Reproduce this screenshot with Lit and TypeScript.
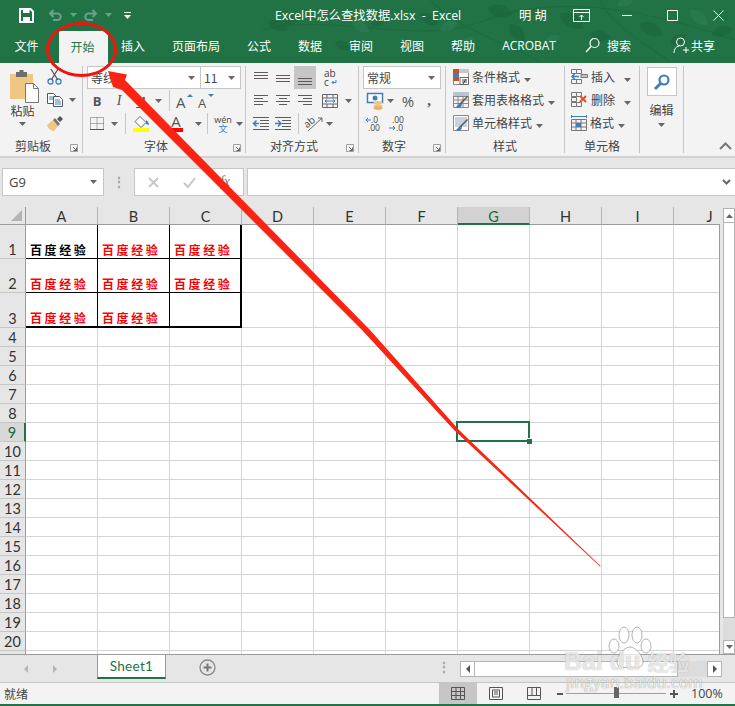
import { LitElement, html, svg, css } from 'lit';
import { customElement } from 'lit/decorators.js';

const BLUE = '#3d7ebb';
const GREY = '#5c5c5c';

// helper for the little ribbon icons
const ico = (w: number, h: number, body: unknown) =>
  html`<svg width=${w} height=${h} viewBox="0 0 ${w} ${h}" fill="none">${body}</svg>`;

const caret = (color = '#666') =>
  ico(7, 4, svg`<path d="M0 0h7L3.5 4z" fill=${color} />`);

const launcher = html`<span class="launch">${ico(8, 8, svg`
  <path d="M.5 7.5V.5h7v7z" stroke="#a0a0a0" /><path d="M3 3l3.5 3.5M6.5 3.5v3h-3" stroke="#666" />`)}</span>`;

const lines = (rows: number[][], color = GREY) =>
  rows.map(([x1, y, x2]) => svg`<path d="M${x1} ${y + 0.5}H${x2}" stroke=${color} />`);

const icons = {
  save: ico(15, 15, svg`<path d="M1 1h10.5L14 3.5V14H1z" stroke="#fff" stroke-width="2" />
    <path d="M4 1.5h6.5V5H4zM4 9h7v5H4z" fill="#fff" />`),
  undo: ico(15, 12, svg`<path d="M2 4.5h7.5a3.2 3.2 0 0 1 0 6.5H5M5.5 1L2 4.5 5.5 8" stroke="#6aa287" stroke-width="2" />`),
  redo: ico(15, 12, svg`<path d="M13 4.5H5.5a3.2 3.2 0 0 0 0 6.5H10M9.5 1L13 4.5 9.5 8" stroke="#6aa287" stroke-width="2" />`),
  qat: ico(7, 7, svg`<path d="M0 0h7v1H0zM0 3h7L3.5 7z" fill="#fff" />`),
  display: ico(17, 13, svg`<path d="M.5.5h16v12H.5zM.5 3.5h16" stroke="#fff" /><path d="M8.5 11V6M6.5 8l2-2 2 2" stroke="#fff" />`),
  min: ico(10, 1, svg`<path d="M0 .5h10" stroke="#fff" />`),
  max: ico(11, 11, svg`<path d="M.5.5h10v10H.5z" stroke="#fff" />`),
  close: ico(11, 11, svg`<path d="M.5.5l10 10M10.5.5l-10 10" stroke="#fff" />`),
  search: ico(15, 17, svg`<circle cx="9.5" cy="6" r="4.5" stroke="#fff" stroke-width="1.2" /><path d="M6 9.5L1 15" stroke="#fff" stroke-width="1.4" />`),
  user: ico(17, 17, svg`<circle cx="7.5" cy="5" r="4" stroke="#fff" /><path d="M1 16c0-4 2-6.5 5-7M13 10v6M10 13h6" stroke="#fff" />`),
  paste: ico(29, 33, svg`
    <path d="M0 4h23v25H0z" fill="#efc783" />
    <path d="M6 2h11v5H6zM9.5 0h4v3h-4z" fill="#6d6d6d" />
    <path d="M15.5 13.5h8l5 5v14h-13z" fill="#fff" stroke="#777" /><path d="M23.5 13.5v5h5" stroke="#777" />`),
  scissors: ico(15, 16, svg`<circle cx="3.5" cy="12.5" r="2.5" stroke=${BLUE} stroke-width="1.3" /><circle cx="11.5" cy="12.5" r="2.5" stroke=${BLUE} stroke-width="1.3" />
    <path d="M4.5 10.5L11 0M10.5 10.5L4 0" stroke="#555" stroke-width="1.3" />`),
  copy: ico(16, 14, svg`<path d="M.5.5h6l2 2v8H.5z" fill="#fff" stroke="#555" /><path d="M6.5 3.5h6l3 3v7h-9z" fill="#fff" stroke="#555" />
    <path d="M2 4h4M2 6h4M8 7h5M8 9h6M8 11h6" stroke=${BLUE} />`),
  brush: ico(16, 15, svg`<path d="M0 9l6-5 5 6-4 5C5 15 1 13 0 9z" fill="#efc783" /><path d="M6 4l5 6 2-2-5-6z" fill="#777" /><path d="M10 3l3-3 3 3-3 3z" fill="#555" />`),
  borders: ico(14, 13, svg`<path d="M.5.5h13v12H.5zM7 .5v12M.5 6.5h13" stroke="#666" stroke-dasharray="1 1" /><path d="M0 12.5h14" stroke="#555" />`),
  fill: ico(17, 12, svg`<path d="M7 .5l6 6-5 5-6-6z" stroke="#666" fill="#fff" /><path d="M13 4c2 1 3 3 3 5l-3-1z" fill=${BLUE} />`),
  grow: ico(18, 16, svg`<text x="0" y="15" class="big-a">A</text><path d="M11 4l3-3 3 3z" fill=${BLUE} />`),
  shrink: ico(18, 14, svg`<text x="0" y="13.5" class="small-a">A</text><path d="M10 0h6l-3 3z" fill=${BLUE} />`),
  alignV: (y: number) => ico(14, 16, svg`${lines([[0, y, 14], [0, y + 3, 14], [0, y + 6, 14]])}`),
  wrap: ico(13, 17, svg`<text x="0" y="8" class="ab">ab</text><text x="0" y="16.5" class="ab">c</text><path d="M12 11v2.5H8M9.5 12L8 13.5 9.5 15" stroke=${BLUE} />`),
  alignH: (a: number, b: number) => ico(14, 13, svg`${lines([[0, 1, 14], [a, 4, b], [0, 7, 14], [a, 10, b]])}`),
  merge: ico(16, 14, svg`<path d="M.5.5h15v13H.5zM.5 4h15M.5 10h15M5 .5V4M11 .5V4M5 10v4M11 10v4" stroke="#666" /><path d="M3 7h10M5 5.5L3 7l2 1.5M11 5.5L13 7l-2 1.5" stroke=${BLUE} />`),
  outdent: ico(16, 13, svg`${lines([[0, 0, 16], [7, 3, 16], [7, 6, 16], [7, 9, 16], [0, 12, 16]])}<path d="M6 6.5H1M3.5 3.5L.5 6.5l3 3" stroke=${BLUE} stroke-width="1.5" />`),
  indent: ico(16, 13, svg`${lines([[0, 0, 16], [7, 3, 16], [7, 6, 16], [7, 9, 16], [0, 12, 16]])}<path d="M0 6.5h5M3 3.5l3 3-3 3" stroke=${BLUE} stroke-width="1.5" />`),
  orient: ico(18, 17, svg`<text x="0" y="10" class="ab" transform="rotate(-40 6 9)">ab</text><path d="M3 16L17 3M13 3h4v4" stroke="#666" />`),
  accounting: ico(17, 18, svg`<path d="M.5 1.5h15v9H.5z" fill="#fff" stroke=${BLUE} stroke-width="1.5" /><circle cx="8" cy="6" r="2.5" fill=${BLUE} />
    <ellipse cx="11" cy="11" rx="4.5" ry="1.8" fill="#efc783" /><ellipse cx="11" cy="14" rx="4.5" ry="1.8" fill="#efc783" /><ellipse cx="11" cy="16" rx="4.5" ry="1.8" fill="#e2b163" />`),
  decLess: ico(16, 15, svg`<text x="5" y="6.5" class="dec">.0</text><text x="2" y="14.5" class="dec">.00</text><path d="M5 4H0M2 2L0 4l2 2" stroke=${BLUE} />`),
  decMore: ico(16, 15, svg`<text x="4" y="6.5" class="dec">.00</text><text x="8" y="14.5" class="dec">.0</text><path d="M1 12h6M5 10l2 2-2 2" stroke=${BLUE} />`),
  cond: ico(16, 16, svg`<path d="M.5.5h15v15H.5z" fill="#fff" stroke="#888" /><path d="M0 0h6v4H0zM0 8h6v4H0z" fill="#c8502b" /><path d="M6 0h10v4H6z" fill="#c7c7c7" /><path d="M0 4h6v4H0z" fill=${BLUE} />
    <path d="M7 8.5h8.5v7H7z" fill="#fff" stroke="#666" /><path d="M9 11h5M9 13h5M13 10l-3 5" stroke="#444" />`),
  table: ico(16, 16, svg`<path d="M.5.5h15v15H.5zM.5 4.5h15M.5 8h15M.5 11.5h15M5 .5v15M10 .5v15" stroke="#888" /><path d="M0 0h16v4H0z" fill="#b9c4d2" /><path d="M15 5l-6 6-1 3-4 2 3-5 2-2 5-5z" fill="#555" /><path d="M3 15l4-4 2 2-2 3z" fill=${BLUE} />`),
  cellStyle: ico(16, 16, svg`<path d="M.5.5h15v15H.5z" stroke="#888" fill="#fff" /><path d="M2 2h12v10H2z" fill="#c4d2e4" /><path d="M15 5l-6 6-1 3-4 2 3-5 2-2 5-5z" fill="#555" /><path d="M3 15l4-4 2 2-2 3z" fill=${BLUE} />`),
  insert: ico(17, 15, svg`<path d="M.5.5h5v4h-5zM.5 10.5h5v4h-5zM5.5 10.5h5v4h-5zM5.5.5h5v4h-5z" stroke="#777" /><path d="M10 5.5h6.5v3H10z" fill="#b9c4d2" stroke="#777" /><path d="M8 7.5H1M3.5 5L1 7.5 3.5 10" stroke=${BLUE} stroke-width="1.5" />`),
  del: ico(17, 15, svg`<path d="M.5.5h5v4h-5zM5.5.5h5v4h-5zM.5 10.5h5v4h-5zM5.5 10.5h5v4h-5zM.5 5.5h5v4h-5z" stroke="#777" /><path d="M9 4l6 6M15 4l-6 6" stroke="#d9542b" stroke-width="2" />`),
  format: ico(16, 17, svg`<path d="M.5 1v3M15.5 1v3M1 2.5h14" stroke=${BLUE} /><path d="M.5 5.5h15v11H.5zM5 5.5v11M10 5.5v11M.5 9h15M.5 13h15" stroke="#777" /><path d="M5 9h5v4H5z" fill=${BLUE} />`),
  find: ico(18, 18, svg`<circle cx="11" cy="7" r="4.5" stroke=${BLUE} stroke-width="2.2" /><path d="M7.5 10.5L2 16" stroke=${BLUE} stroke-width="3" />`),
  chevUp: ico(13, 8, svg`<path d="M1 7l5.5-5.5L12 7" stroke="#777" stroke-width="2" />`),
  chevDown: ico(9, 6, svg`<path d="M1 1l3.5 3.5L8 1" stroke="#666" stroke-width="2" />`),
  cancel: ico(11, 11, svg`<path d="M1 1l9 9M10 1l-9 9" stroke="#c6c6c6" stroke-width="1.8" />`),
  enter: ico(13, 11, svg`<path d="M1 6l4 4 7-9" stroke="#c6c6c6" stroke-width="2" />`),
  viewNormal: ico(14, 13, svg`<path d="M.5.5h13v12H.5zM5 .5v12M9.5 .5v12M.5 4.5h13M.5 8.5h13" stroke="#555" />`),
  viewPage: ico(14, 13, svg`<path d="M.5.5h13v12H.5z" stroke="#555" /><path d="M3.5 3h7v7h-7zM5 5h4M5 7h4" stroke="#555" />`),
  viewBreak: ico(14, 13, svg`<path d="M.5.5h13v12H.5zM.5 8.5h13M5 .5v8M9.5 .5v8" stroke="#555" />`),
  plusCircle: ico(17, 17, svg`<circle cx="8.5" cy="8.5" r="7.5" stroke="#8a8a8a" stroke-width="1.3" /><path d="M8.5 4.5v8M4.5 8.5h8" stroke="#777" stroke-width="2" />`),
};

const LEAVES = [
  [268, 22, 20, 1], [284, 24, -30, 0.9], [352, 20, 35, 1], [372, 26, -40, 1.1], [420, 14, 30, 1], [440, 30, -25, 0.9],
  [488, 8, 15, 1.2], [510, 24, 50, 1.1], [545, 42, -20, 0.8], [560, 14, 30, 1.3], [590, 34, 10, 1], [618, 6, -35, 1],
  [640, 24, 25, 1.2], [670, 44, -30, 0.9], [690, 10, 40, 1.1], [712, 34, -15, 1], [335, 42, 25, 0.8], [460, 46, -30, 0.8],
];

const COLS = ['A', 'B', 'C', 'D', 'E', 'F', 'G', 'H', 'I', 'J'];
const BAIDU = '百度经验';

@customElement('app-root')
export class AppRoot extends LitElement {
  static styles = css`
    :host {
      --green: #217346;
      --blue: #3d7ebb;
      display: flex;
      flex-direction: column;
      position: relative;
      width: 735px;
      height: 706px;
      overflow: hidden;
      background: #e6e6e6;
      font-family: 'Noto Sans CJK SC', sans-serif;
      font-size: 12px;
      color: #444;
    }
    svg {
      overflow: visible;
    }

    /* barra verde */
    .top {
      position: relative;
      height: 63px;
      background: var(--green);
      overflow: hidden;
      color: #fff;
    }
    .leaves {
      position: absolute;
      inset: 0;
      opacity: 0.75;
    }
    .titlebar {
      position: relative;
      display: grid;
      grid-template-columns: 19px 29px 22px 13px 22px 19px 7px 144px 187px 57px 28px 26px 17px 32px 10px 35px 11px 35px 11px;
      height: 30px;
      align-items: center;
      justify-items: start;
      font-family: 'Open Sans', 'Noto Sans CJK SC', sans-serif;
      white-space: nowrap;
    }
    .title {
      font-size: 12.3px;
    }
    .tabs {
      position: relative;
      display: flex;
      height: 33px;
      padding-left: 1px;
    }
    .tab {
      display: flex;
      align-items: center;
      padding: 0 13.5px 2px;
      white-space: nowrap;
    }
    .tab.first {
      padding-right: 20px;
    }
    .tab.on {
      width: 49px;
      box-sizing: border-box;
      padding: 0 12px 1px;
      margin-top: 1px;
      background: #f3f3f3;
      color: var(--green);
    }
    .tab.acro {
      font-family: 'Open Sans', sans-serif;
      font-size: 12px;
      padding-right: 29px;
    }
    .tab.search {
      gap: 7px;
      padding: 0 42px 2px 0;
    }
    .tab.share {
      gap: 1px;
      padding: 0 0 2px;
    }

    /* faixa de opções */
    .ribbon {
      display: flex;
      height: 95px;
      box-sizing: border-box;
      padding: 3px 0 3px;
      background: #f3f3f3;
      border-bottom: 2px solid #d2d2d2;
      position: relative;
    }
    .group {
      display: flex;
      flex-direction: column;
      box-sizing: border-box;
      border-right: 1px solid #c6c6c6;
    }
    .g-clip { width: 83px; }
    .g-font { width: 163px; }
    .g-align { width: 113px; }
    .g-num { width: 87px; }
    .g-style { width: 119px; }
    .g-cell { width: 75px; }
    .g-edit { width: 44px; }
    .g-body {
      height: 71px;
    }
    .foot {
      display: flex;
      height: 16px;
      align-items: center;
    }
    .lab {
      flex: 1;
      text-align: center;
    }
    .launch {
      display: flex;
      width: 16px;
      justify-content: center;
      padding-top: 6px;
    }
    .row {
      display: grid;
      height: 23px;
      align-items: center;
      justify-items: center;
    }
    .rsep {
      width: 1px;
      height: 21px;
      background: #c6c6c6;
    }
    .combo {
      display: flex;
      align-items: center;
      justify-content: space-between;
      box-sizing: border-box;
      height: 23px;
      padding: 0 5px 0 3px;
      background: #fff;
      border: 1px solid #c6c6c6;
      justify-self: stretch;
    }
    .combo + .combo {
      border-left: 0;
    }
    .letter {
      font: 700 13px 'Open Sans', sans-serif;
      color: #555;
    }
    .letter.i {
      font: italic 14px 'Liberation Serif', serif;
    }
    .letter.u {
      text-decoration: underline;
    }
    .big-a {
      font: 15px 'Open Sans', sans-serif;
      fill: #555;
    }
    .small-a {
      font: 13px 'Open Sans', sans-serif;
      fill: #555;
    }
    .ab {
      font: 10px 'Open Sans', sans-serif;
      fill: #444;
    }
    .dec {
      font: 8.5px 'Open Sans', sans-serif;
      fill: #444;
    }

    .clip {
      display: grid;
      grid-template-columns: 45px 38px;
      height: 71px;
    }
    .paste {
      display: flex;
      flex-direction: column;
      align-items: center;
      padding-top: 4px;
    }
    .paste svg:first-child {
      margin-left: 3px;
    }
    .paste span {
      line-height: 16px;
    }
    .paste span + svg {
      margin-top: 3px;
    }
    .clip-side {
      display: flex;
      flex-direction: column;
      padding: 3px 0 0 2px;
      gap: 7px;
    }
    .clip-row {
      display: flex;
      align-items: center;
      gap: 6px;
      height: 16px;
    }

    .font-1 { grid-template-columns: 114px 40px; padding-left: 4px; }
    .font-2 { grid-template-columns: 22px 22px 22px 12px 10px 22px 22px; padding-left: 3px; }
    .font-3 { grid-template-columns: 22px 12px 10px 22px 13px 22px 8px 7px 10px 22px 10px; padding-left: 3px; }
    .fill-ico, .color-ico {
      display: flex;
      flex-direction: column;
      align-items: center;
    }
    .bar-y {
      width: 16px;
      height: 4px;
      background: #ffff00;
    }
    .bar-r {
      width: 13px;
      height: 4px;
      background: #ff0000;
    }
    .color-a {
      font: 15px/13px 'Open Sans', sans-serif;
      color: #555;
    }
    .wen {
      display: flex;
      flex-direction: column;
      align-items: center;
      font: 9px/9px 'Open Sans', 'Noto Sans CJK SC', sans-serif;
    }
    .wen b {
      font-weight: 400;
      color: var(--blue);
    }

    .al-1 { grid-template-columns: 22px 22px 22px 28px; padding-left: 4px; }
    .al-2 { grid-template-columns: 22px 22px 22px 28px 8px; padding-left: 4px; }
    .al-3 { grid-template-columns: 22px 22px 8px 23px 8px; padding-left: 4px; }
    .active {
      justify-self: stretch;
      display: flex;
      justify-content: center;
      align-items: center;
      height: 23px;
      background: #c6c6c6;
    }
    .num-1 { grid-template-columns: 78px; padding-left: 4px; }
    .num-2 { grid-template-columns: 24px 7px 28px 14px; padding-left: 4px; }
    .num-3 { grid-template-columns: 22px 22px; padding-left: 4px; }
    .pct {
      font: 15px 'Open Sans', sans-serif;
      color: #555;
    }
    .comma {
      font: 700 15px 'Liberation Serif', serif;
      color: #555;
    }
    .list {
      display: flex;
      flex-direction: column;
      margin-top: -1px;
      padding: 0 0 0 7px;
    }
    .item {
      display: flex;
      align-items: center;
      height: 23px;
      gap: 3px;
      white-space: nowrap;
    }
    .item .after {
      margin-left: 1px;
    }
    .cells .item {
      gap: 3px;
    }
    .cells .gap {
      margin-left: 6px;
    }
    .cells .list {
      padding-left: 6px;
    }
    .cells .foot, .g-style .foot {
      margin-top: 1px;
    }
    .edit {
      display: flex;
      flex-direction: column;
      align-items: center;
      padding-top: 1px;
      gap: 5px;
    }
    .edit-box {
      display: flex;
      align-items: center;
      justify-content: center;
      width: 30px;
      height: 29px;
      box-sizing: border-box;
      background: #fff;
      border: 1px solid #c6c6c6;
    }
    .collapse {
      position: absolute;
      right: 3px;
      bottom: 3px;
    }

    /* barra de fórmulas */
    .formula {
      display: flex;
      align-items: center;
      height: 49px;
      padding: 0 0 1px 2px;
      box-sizing: border-box;
    }
    .name {
      display: flex;
      align-items: center;
      justify-content: space-between;
      box-sizing: border-box;
      width: 102px;
      height: 28px;
      padding: 0 6px;
      background: #fff;
      border: 1px solid #c6c6c6;
      font: 13px 'Open Sans', sans-serif;
    }
    .dots {
      width: 30px;
      text-align: center;
      color: #a0a0a0;
      font: 700 12px/8px 'Open Sans', sans-serif;
    }
    .fx-btns {
      display: grid;
      grid-template-columns: 36px 36px 36px;
      align-items: center;
      justify-items: center;
      box-sizing: border-box;
      width: 110px;
      height: 28px;
      background: #fff;
      border: 1px solid #c6c6c6;
    }
    .fx {
      font: italic 14px 'Liberation Serif', serif;
      color: #777;
    }
    .input {
      display: flex;
      align-items: center;
      justify-content: flex-end;
      flex: 1;
      height: 28px;
      margin-left: 3px;
      padding-right: 4px;
      box-sizing: border-box;
      background: #fff;
      border: 1px solid #c6c6c6;
      border-right: 0;
    }

    /* planilha */
    .sheet-wrap {
      display: flex;
      height: 447px;
    }
    .sheet {
      width: 720px;
      overflow: hidden;
      flex: none;
    }
    .head, .grid-row {
      display: flex;
      width: 748px;
    }
    .head {
      height: 18px;
      font: 14.5px/19px Lato, sans-serif;
      color: #333;
    }
    .corner {
      display: flex;
      align-items: flex-end;
      justify-content: flex-end;
      width: 26px;
      box-sizing: border-box;
      padding: 0 3px 3px 0;
      border-right: 1px solid #9c9c9c;
      border-bottom: 1px solid #9c9c9c;
      flex: none;
    }
    .ch {
      width: 72px;
      box-sizing: border-box;
      text-align: center;
      border-right: 1px solid #b4b4b4;
      border-bottom: 1px solid #9c9c9c;
      flex: none;
    }
    .ch.cur {
      background: #d2d2d2;
      color: #1d6a3f;
      border-bottom: 2px solid var(--green);
    }
    .body {
      width: 720px;
      height: 429px;
      overflow: hidden;
      box-sizing: border-box;
      border-right: 1px solid #9c9c9c;
    }
    .grid-row {
      height: 19px;
    }
    .grid-row.r1, .grid-row.r2 {
      height: 34px;
    }
    .grid-row.r3 {
      height: 35px;
    }
    .rh {
      display: flex;
      align-items: flex-end;
      justify-content: center;
      width: 26px;
      box-sizing: border-box;
      background: #e6e6e6;
      border-right: 1px solid #9c9c9c;
      border-bottom: 1px solid #c6c6c6;
      font: 14.5px/16px Lato, sans-serif;
      color: #333;
      flex: none;
    }
    .rh.cur {
      background: #d8d8d8;
      border-right: 2px solid var(--green);
      color: #1d6a3f;
    }
    .c {
      position: relative;
      display: flex;
      align-items: flex-end;
      width: 72px;
      box-sizing: border-box;
      padding: 0 0 0 4px;
      background: #fff;
      border-right: 1px solid #d4d4d4;
      border-bottom: 1px solid #d4d4d4;
      flex: none;
      font-weight: 700;
      font-size: 12px;
      line-height: 16px;
      letter-spacing: 2.6px;
      color: #ff0000;
      white-space: nowrap;
    }
    .c.black { color: #000; }
    .c.bb { border-bottom-color: #000; }
    .c.br { border-right-color: #000; }
    .c.thick-r { border-right: 2px solid #000; }
    .c.thick-b { border-bottom: 2px solid #000; }
    .sel {
      position: absolute;
      z-index: 2;
      left: -2px;
      top: -2px;
      width: 74px;
      height: 21px;
      box-sizing: border-box;
      border: 2px solid var(--green);
    }
    .handle {
      position: absolute;
      right: -4px;
      bottom: -4px;
      width: 5px;
      height: 5px;
      background: var(--green);
      box-shadow: 0 -1px #fff;
    }
    .vbar {
      display: flex;
      flex-direction: column;
      width: 12px;
      margin: 1px 0 0 3px;
      background: #dcdcdc;
    }
    .sb-btn {
      display: flex;
      align-items: center;
      justify-content: center;
      height: 15px;
      background: #fff;
      border: 1px solid #b4b4b4;
      box-sizing: border-box;
      flex: none;
    }
    .vbar .sb-btn:last-child {
      height: 14px;
    }
    .v-thumb {
      height: 395px;
      background: #fff;
      border: 1px solid #b4b4b4;
      border-top: 0;
      box-sizing: border-box;
      flex: none;
    }
    .v-space {
      flex: 1;
    }

    /* abas */
    .sheetbar {
      display: flex;
      align-items: stretch;
      height: 28px;
      box-sizing: border-box;
      border-top: 1px solid #9c9c9c;
      background: #e6e6e6;
    }
    .nav {
      display: flex;
      width: 97px;
      align-items: center;
      box-sizing: border-box;
      padding-left: 24px;
      gap: 25px;
      flex: none;
    }
    .sheet-tab {
      display: flex;
      align-items: center;
      justify-content: center;
      width: 69px;
      height: 24px;
      box-sizing: border-box;
      background: #fff;
      border-left: 1px solid #9c9c9c;
      border-right: 1px solid #9c9c9c;
      border-bottom: 2px solid var(--green);
      font: 13.5px Lato, sans-serif;
      letter-spacing: 0.3px;
      color: var(--green);
      flex: none;
    }
    .add {
      display: flex;
      align-items: center;
      width: 266px;
      padding: 0 0 3px 33px;
      box-sizing: border-box;
      flex: none;
    }
    .hdots {
      display: flex;
      width: 12px;
      margin-left: 6px;
      padding-bottom: 3px;
      align-items: center;
      flex: none;
      color: #a0a0a0;
      font: 700 12px/8px 'Open Sans', sans-serif;
      justify-content: center;
    }
    .hbar {
      display: flex;
      width: 262px;
      height: 16px;
      margin: 6px 0 0 10px;
      background: #dcdcdc;
      flex: none;
    }
    .hbar .sb-btn {
      width: 15px;
      height: 16px;
    }
    .h-thumb {
      width: 203px;
      background: #fff;
      border: 1px solid #b4b4b4;
      border-left: 0;
      box-sizing: border-box;
    }
    .h-space {
      flex: 1;
    }

    /* barra de status */
    .status {
      display: flex;
      align-items: center;
      height: 24px;
      box-sizing: border-box;
      background: #f3f3f3;
      border-top: 1px solid #c6c6c6;
      border-bottom: 2px solid var(--green);
      padding-left: 4px;
    }
    .ready {
      width: 435px;
      flex: none;
    }
    .view {
      display: flex;
      align-items: center;
      justify-content: center;
      width: 38px;
      height: 100%;
      flex: none;
    }
    .view.on {
      background: #c6c6c6;
    }
    .zoom {
      display: grid;
      grid-template-columns: 8px 104px 12px;
      align-items: center;
      justify-items: center;
      margin-left: 3px;
      flex: none;
    }
    .z-track {
      position: relative;
      width: 100px;
      height: 1px;
      background: #a0a0a0;
    }
    .z-thumb {
      position: absolute;
      left: 48px;
      top: -6px;
      width: 5px;
      height: 11px;
      background: #666;
    }
    .pct-label {
      margin-left: 11px;
      font: 12.5px 'Open Sans', sans-serif;
      color: #444;
    }

    /* anotações por cima da captura */
    .overlay {
      position: absolute;
      z-index: 3;
      left: 0;
      top: 0;
      pointer-events: none;
    }
    .mark {
      position: absolute;
      z-index: 3;
      left: 564px;
      top: 626px;
      width: 140px;
      height: 70px;
      color: rgba(255, 255, 255, 0.72);
      text-shadow: 0 0 1px rgba(110, 110, 110, 0.6);
      pointer-events: none;
    }
    .mark-main {
      position: absolute;
      left: 0;
      top: 22px;
      display: flex;
      align-items: center;
      font: 700 25px/26px 'Liberation Sans', sans-serif;
      white-space: nowrap;
    }
    .mark-cn {
      margin-left: 7px;
      font: 700 21px/26px 'Noto Sans CJK SC', sans-serif;
    }
    .mark-sub {
      position: absolute;
      left: 2px;
      top: 47px;
      font: 15.5px/18px 'Open Sans', sans-serif;
      letter-spacing: 0.3px;
      color: rgba(255, 255, 255, 0.85);
      text-shadow: 0 0 1px rgba(90, 90, 90, 0.8);
      white-space: nowrap;
    }
    .paw {
      position: absolute;
      left: 44px;
      top: 0;
    }
  `;

  private cellClass(col: number, row: number) {
    const parts = ['c'];
    if (row <= 3 && col < 3) {
      if (col === 0 && row === 1) parts.push('black');
      parts.push(row === 3 ? 'thick-b' : 'bb');
      parts.push(col === 2 ? 'thick-r' : 'br');
    }
    return parts.join(' ');
  }

  private renderRow(row: number) {
    const filled = (col: number) => row <= 3 && col < 3 && !(row === 3 && col === 2);
    // a linha 21 mal aparece, só a borda de cima
    return html`
      <div class="grid-row r${row}">
        <div class="rh ${row === 9 ? 'cur' : ''}">${row < 21 ? row : ''}</div>
        ${COLS.map(
          (_, col) => html`<div class=${this.cellClass(col, row)}>
            ${filled(col) ? BAIDU : ''}
            ${row === 9 && col === 6 ? html`<div class="sel"><div class="handle"></div></div>` : ''}
          </div>`
        )}
      </div>
    `;
  }

  private renderTop() {
    return html`
      <div class="top">
        <svg class="leaves" width="735" height="63">
          <path d="M262 30C330 12 420 46 480 22S620 0 735 40M430 0c30 30 70 40 110 62M600 0c10 24 40 40 70 62" stroke="#1b6339" stroke-width="1.2" fill="none" opacity=".6" />
          ${LEAVES.map(
            ([x, y, r, s], i) => svg`<path d="M0 0C5-7 15-7 21 0 15 7 5 7 0 0z"
              fill=${i % 3 === 2 ? '#2f7f54' : '#1b6339'} opacity=".75"
              transform="translate(${x} ${y}) rotate(${r}) scale(${s})" />`
          )}
        </svg>
        <div class="titlebar">
          <span></span>${icons.save}
          ${icons.undo}${caret('#6aa287')}${icons.redo}${caret('#6aa287')}
          ${icons.qat}<span></span>
          <span class="title">Excel中怎么查找数据.xlsx&nbsp; -&nbsp; Excel</span><span></span>
          <span class="title">明 胡</span><span></span>
          ${icons.display}<span></span>${icons.min}<span></span>${icons.max}<span></span>${icons.close}
        </div>
        <div class="tabs">
          <div class="tab first">文件</div>
          <div class="tab on">开始</div>
          ${['插入', '页面布局', '公式', '数据', '审阅', '视图', '帮助'].map((t) => html`<div class="tab">${t}</div>`)}
          <div class="tab acro">ACROBAT</div>
          <div class="tab search">${icons.search}<span>搜索</span></div>
          <div class="tab share">${icons.user}<span>共享</span></div>
        </div>
      </div>
    `;
  }

  private renderRibbon() {
    return html`
      <div class="ribbon">
        <div class="group g-clip">
          <div class="g-body clip">
            <div class="paste">${icons.paste}<span>粘贴</span>${caret()}</div>
            <div class="clip-side">
              <div class="clip-row">${icons.scissors}</div>
              <div class="clip-row">${icons.copy}${caret()}</div>
              <div class="clip-row">${icons.brush}</div>
            </div>
          </div>
          <div class="foot"><span class="lab">剪贴板</span>${launcher}</div>
        </div>

        <div class="group g-font">
          <div class="g-body">
            <div class="row font-1">
              <div class="combo"><span>等线</span>${caret()}</div>
              <div class="combo"><span>11</span>${caret()}</div>
            </div>
            <div class="row font-2">
              <span class="letter">B</span><span class="letter i">I</span><span class="letter u">U</span>${caret()}
              <span class="rsep"></span>${icons.grow}${icons.shrink}
            </div>
            <div class="row font-3">
              ${icons.borders}${caret()}<span class="rsep"></span>
              <div class="fill-ico">${icons.fill}<span class="bar-y"></span></div><span></span>
              <div class="color-ico"><span class="color-a">A</span><span class="bar-r"></span></div><span></span>${caret()}
              <span class="rsep"></span>
              <div class="wen"><span>wén</span><b>文</b></div>${caret()}
            </div>
          </div>
          <div class="foot"><span class="lab">字体</span>${launcher}</div>
        </div>

        <div class="group g-align">
          <div class="g-body">
            <div class="row al-1">
              ${icons.alignV(2)}${icons.alignV(5)}
              <div class="active">${icons.alignV(8)}</div>
              ${icons.wrap}
            </div>
            <div class="row al-2">
              ${icons.alignH(0, 9)}${icons.alignH(3, 11)}${icons.alignH(5, 14)}${icons.merge}${caret()}
            </div>
            <div class="row al-3">
              ${icons.outdent}${icons.indent}<span class="rsep"></span>${icons.orient}${caret()}
            </div>
          </div>
          <div class="foot"><span class="lab">对齐方式</span>${launcher}</div>
        </div>

        <div class="group g-num">
          <div class="g-body">
            <div class="row num-1"><div class="combo"><span>常规</span>${caret()}</div></div>
            <div class="row num-2">
              ${icons.accounting}${caret()}<span class="pct">%</span><span class="comma">,</span>
            </div>
            <div class="row num-3">${icons.decLess}${icons.decMore}</div>
          </div>
          <div class="foot"><span class="lab">数字</span>${launcher}</div>
        </div>

        <div class="group g-style">
          <div class="g-body list">
            <div class="item">${icons.cond}<span>条件格式</span><span class="after">${caret()}</span></div>
            <div class="item">${icons.table}<span>套用表格格式</span><span class="after">${caret()}</span></div>
            <div class="item">${icons.cellStyle}<span>单元格样式</span><span class="after">${caret()}</span></div>
          </div>
          <div class="foot"><span class="lab">样式</span></div>
        </div>

        <div class="group g-cell cells">
          <div class="g-body list">
            <div class="item">${icons.insert}<span>插入</span><span class="gap">${caret()}</span></div>
            <div class="item">${icons.del}<span>删除</span><span class="gap">${caret()}</span></div>
            <div class="item">${icons.format}<span>格式</span><span class="after">${caret()}</span></div>
          </div>
          <div class="foot"><span class="lab">单元格</span></div>
        </div>

        <div class="group g-edit">
          <div class="g-body edit">
            <div class="edit-box">${icons.find}</div>
            <span>编辑</span>
            ${caret()}
          </div>
        </div>
        <div class="collapse">${icons.chevUp}</div>
      </div>
    `;
  }

  private renderFormula() {
    return html`
      <div class="formula">
        <div class="name"><span>G9</span>${caret()}</div>
        <div class="dots">⋮</div>
        <div class="fx-btns">${icons.cancel}${icons.enter}<span class="fx">fx</span></div>
        <div class="input">${icons.chevDown}</div>
      </div>
    `;
  }

  private renderSheet() {
    const rows = Array.from({ length: 21 }, (_, i) => i + 1);
    return html`
      <div class="sheet-wrap">
        <div class="sheet">
          <div class="head">
            <div class="corner">${ico(11, 11, svg`<path d="M11 0v11H0z" fill="#b4b4b4" />`)}</div>
            ${COLS.map((c) => html`<div class="ch ${c === 'G' ? 'cur' : ''}">${c}</div>`)}
          </div>
          <div class="body">${rows.map((r) => this.renderRow(r))}</div>
        </div>
        <div class="vbar">
          <div class="sb-btn">${ico(7, 4, svg`<path d="M0 4h7L3.5 0z" fill="#666" />`)}</div>
          <div class="v-thumb"></div>
          <div class="v-space"></div>
          <div class="sb-btn">${caret()}</div>
        </div>
      </div>
    `;
  }

  private renderBottom() {
    return html`
      <div class="sheetbar">
        <div class="nav">
          ${ico(4, 8, svg`<path d="M4 0v8L0 4z" fill="#b4b4b4" />`)}
          ${ico(4, 8, svg`<path d="M0 0v8l4-4z" fill="#b4b4b4" />`)}
        </div>
        <div class="sheet-tab">Sheet1</div>
        <div class="add">${icons.plusCircle}</div>
        <div class="hdots">⋮</div>
        <div class="hbar">
          <div class="sb-btn">${ico(4, 8, svg`<path d="M4 0v8L0 4z" fill="#555" />`)}</div>
          <div class="h-thumb"></div>
          <div class="h-space"></div>
          <div class="sb-btn">${ico(4, 8, svg`<path d="M0 0v8l4-4z" fill="#555" />`)}</div>
        </div>
      </div>
      <div class="status">
        <span class="ready">就绪</span>
        <div class="view on">${icons.viewNormal}</div>
        <div class="view">${icons.viewPage}</div>
        <div class="view">${icons.viewBreak}</div>
        <div class="zoom">
          ${ico(6, 2, svg`<path d="M0 0h6v2H0z" fill="#555" />`)}
          <div class="z-track"><div class="z-thumb"></div></div>
          ${ico(8, 8, svg`<path d="M3 0h2v3h3v2H5v3H3V5H0V3h3z" fill="#555" />`)}
        </div>
        <span class="pct-label">100%</span>
      </div>
    `;
  }

  render() {
    return html`
      ${this.renderTop()}
      ${this.renderRibbon()}
      ${this.renderFormula()}
      ${this.renderSheet()}
      ${this.renderBottom()}

      <div class="mark">
        <svg class="paw" width="44" height="46" viewBox="0 0 44 46">
          <g fill="rgba(255,255,255,.72)" stroke="rgba(130,130,130,.6)">
            <ellipse cx="6" cy="20" rx="5" ry="7" />
            <ellipse cx="16" cy="9" rx="5" ry="8" />
            <ellipse cx="29" cy="9" rx="5" ry="8" />
            <ellipse cx="38" cy="20" rx="5" ry="7" />
            <path d="M22 21c6 0 13 9 13 15 0 6-6 6-13 5-7 1-13 1-13-5 0-6 7-15 13-15z" />
          </g>
        </svg>
        <div class="mark-main"><span>Bai</span>&nbsp;<span>du</span><span class="mark-cn">经验</span></div>
        <div class="mark-sub">jingyan.baidu.com</div>
      </div>

      <svg class="overlay" width="735" height="706" viewBox="0 0 735 706">
        <ellipse cx="81.5" cy="49.5" rx="34" ry="26" fill="none" stroke="#f0140f" stroke-width="3" />
        <path fill="#fb2412" d="M108 71L127 74.5 125 80
          L370 330 459 430 600.5 566 600 566.5
          L454 430 362 330 122 90
          L113 87z" />
      </svg>
    `;
  }
}
